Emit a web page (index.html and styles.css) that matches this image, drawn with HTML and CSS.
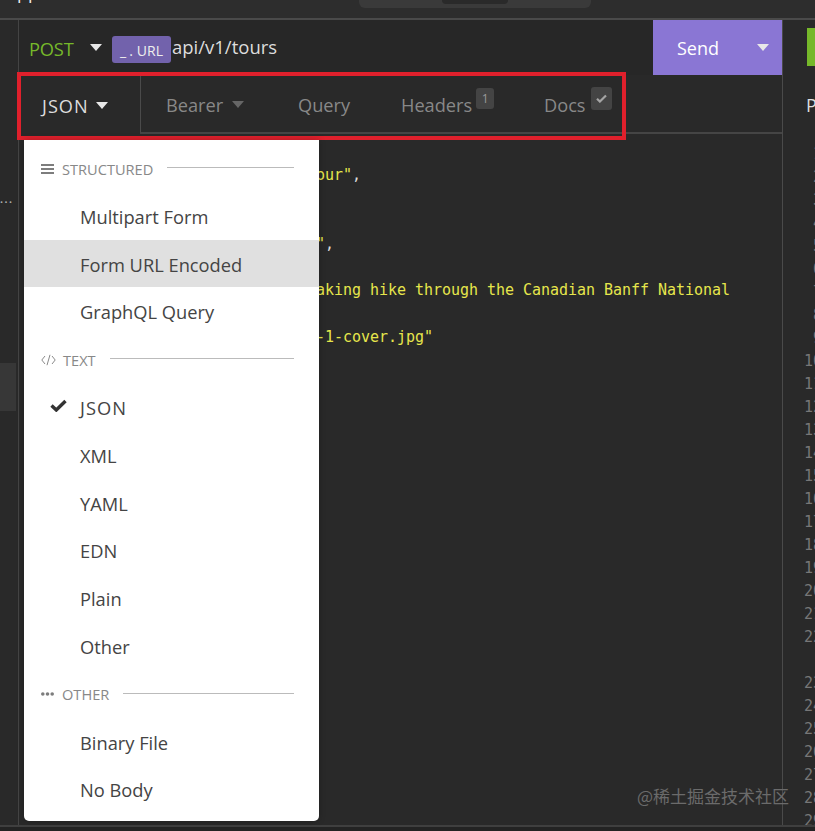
FILE: index.html
```html
<!DOCTYPE html>
<html lang="en">
<head>
<meta charset="utf-8">
<title>Request body menu</title>
<link rel="stylesheet" href="styles.css">
</head>
<body>
<div class="app">
  <header class="titlebar">
    <span class="app-name">pp</span>
    <div class="search-pill"><div class="search-inner"></div></div>
  </header>
  <div class="workspace">
    <aside class="sidebar">
      <div class="side-dots">•••</div>
      <div class="side-selected"></div>
    </aside>
    <main class="request">
      <div class="url-bar">
        <span class="method">POST</span>
        <span class="caret caret-method"></span>
        <span class="tag"><span class="tag-us">_.</span>URL</span>
        <span class="url">api/v1/tours</span>
        <div class="send">
          <span class="send-label">Send</span>
          <span class="caret caret-send"></span>
        </div>
      </div>
      <nav class="tabs">
        <div class="tab tab-active"><span class="wide">JSON</span> <span class="caret caret-json"></span></div>
        <div class="tab-rest">
          <div class="tab tab-bearer">Bearer <span class="caret caret-bearer"></span></div>
          <div class="tab tab-query">Query</div>
          <div class="tab tab-headers">Headers<span class="count">1</span></div>
          <div class="tab tab-docs">Docs<span class="count count-check">
            <svg viewBox="0 0 12 10" width="11" height="9"><path d="M1 5.2 4.2 8.4 11 1.6" fill="none" stroke="#a5a5a5" stroke-width="2.4"/></svg>
          </span></div>
        </div>
      </nav>
      <div class="code">
        <div class="ln">  <span class="k">"name"</span>: <span class="s">"The Test Tour"</span>,</div>
        <div class="ln">  <span class="k">"duration"</span>: <span class="s">5</span>,</div>
        <div class="ln">  <span class="k">"maxGroupSize"</span>: <span class="s">25</span>,</div>
        <div class="ln">  <span class="k">"difficulty"</span>: <span class="s">"easy"</span>,</div>
        <div class="ln">  <span class="k">"price"</span>: <span class="s">397</span>,</div>
        <div class="ln">  <span class="k">"summary"</span>: <span class="s">"Breathtaking hike through the Canadian Banff National</span></div>
        <div class="ln">  <span class="s">Park"</span>,</div>
        <div class="ln">  <span class="k">"imageCover"</span>: <span class="s">"tour-1-cover.jpg"</span></div>
      </div>
    </main>
    <section class="response">
      <div class="send-status"></div>
      <div class="res-tabs">Preview</div>
      <div class="res-nums">
        <div>1</div><div>2</div><div>3</div><div>4</div><div>5</div><div>6</div><div>7</div><div>8</div><div>9</div>
        <div>10</div><div>11</div><div>12</div><div>13</div><div>14</div><div>15</div><div>16</div><div>17</div><div>18</div><div>19</div><div>20</div><div>21</div><div>22</div><div>&nbsp;</div><div>23</div><div>24</div><div>25</div><div>26</div><div>27</div><div>28</div><div>29</div>
      </div>
    </section>
  </div>
  <div class="bottombar"></div>
</div>

<div class="highlight"></div>

<div class="menu">
  <div class="menu-head">
    <svg class="head-icon" viewBox="0 0 13 10" width="13" height="10"><path d="M0 0h13v2H0zM0 4h13v2H0zM0 8h13v2H0z" fill="#7d7d7d"/></svg>
    <span class="head-label">STRUCTURED</span><span class="rule"></span>
  </div>
  <div class="menu-item">Multipart Form</div>
  <div class="menu-item menu-item-hover">Form URL Encoded</div>
  <div class="menu-item">GraphQL Query</div>
  <div class="menu-head">
    <svg class="head-icon" viewBox="0 0 15 12" width="15" height="12"><path d="M4 2 .8 6 4 10M11 2l3.200 4L11 10M9 .8 6 11.200" fill="none" stroke="#8a8a8a" stroke-width="1"/></svg>
    <span class="head-label head-label-text">TEXT</span><span class="rule"></span>
  </div>
  <div class="menu-item menu-item-checked">
    <svg class="check" viewBox="0 0 17 13" width="17" height="13"><path d="M1.500 6.500 6.300 11 15.500 2" fill="none" stroke="#333" stroke-width="3.400"/></svg>
    <span class="wide">JSON</span>
  </div>
  <div class="menu-item">XML</div>
  <div class="menu-item">YAML</div>
  <div class="menu-item">EDN</div>
  <div class="menu-item">Plain</div>
  <div class="menu-item">Other</div>
  <div class="menu-head">
    <svg class="head-icon head-icon-dots" viewBox="0 0 13 4" width="13" height="4"><circle cx="1.800" cy="2" r="1.800" fill="#7d7d7d"/><circle cx="6.500" cy="2" r="1.800" fill="#7d7d7d"/><circle cx="11.200" cy="2" r="1.800" fill="#7d7d7d"/></svg>
    <span class="head-label">OTHER</span><span class="rule"></span>
  </div>
  <div class="menu-item">Binary File</div>
  <div class="menu-item">No Body</div>
</div>

<div class="watermark">@稀土掘金技术社区</div>
</body>
</html>
```
FILE: styles.css
```css
* { box-sizing: border-box; }
html, body { margin: 0; height: 100%; }
body {
  width: 815px;
  height: 831px;
  overflow: hidden;
  position: relative;
  background: #292929;
  font-family: "Open Sans", "Noto Sans", sans-serif;
  color: #ddd;
}
.app { display: flex; flex-direction: column; height: 831px; }
.wide { letter-spacing: 1px; }

.titlebar {
  flex: 0 0 20px;
  display: flex;
  background: #2d2d2d;
  border-bottom: 2px solid #4a4a4a;
  overflow: hidden;
}
.app-name {
  margin: -20px 0 0 17px;
  font-size: 18px;
  line-height: 24px;
  color: #eee;
}
.search-pill {
  width: 232px;
  height: 8px;
  margin-left: 320px;
  background: #3a3a3a;
  border-radius: 0 0 6px 6px;
  display: flex;
  justify-content: center;
}
.search-inner { width: 66px; height: 4px; background: #2a2a2a; border-radius: 0 0 5px 5px; }

.workspace { flex: 1; display: flex; min-height: 0; }
.sidebar {
  flex: 0 0 19px;
  background: #292929;
  border-right: 1px solid #444;
  padding-top: 171px;
  overflow: hidden;
}
.side-dots { height: 22px; font-size: 8px; line-height: 22px; letter-spacing: 1.5px; color: #aaa; white-space: nowrap; }
.side-selected { margin-top: 150px; height: 48px; width: 16px; background: #373737; }

.request { flex: 0 0 764px; display: flex; flex-direction: column; border-right: 1px solid #4a4a4a; min-width: 0; }

.url-bar { flex: 0 0 55px; display: flex; align-items: center; background: #272727; padding-left: 10px; }
.method { font-size: 18.3px; color: #76b82a; letter-spacing: -0.2px; width: 61px; margin-top: 2px; }
.caret { display: inline-block; width: 0; height: 0; border-left: 6px solid transparent; border-right: 6px solid transparent; border-top: 7px solid #e8e8e8; }
.caret-method { margin-right: 10px; }
.tag {
  height: 27px;
  width: 59px;
  margin-top: 4px;
  background: #7262ac;
  border-radius: 3px;
  color: #eee;
  font-size: 14px;
  line-height: 29px;
  padding-left: 8px;
  white-space: nowrap;
}
.tag-us { margin-right: 1px; letter-spacing: 3px; }
.url { font-size: 18.5px; color: #ddd; margin-left: 1px; margin-top: -3px; }
.send {
  margin-left: auto;
  width: 129px;
  height: 55px;
  background: #8a76d4;
  display: flex;
  align-items: center;
  color: #fff;
  font-size: 18px;
  padding-left: 24px;
}
.send-label { width: 80px; }

.tabs { flex: 0 0 59px; display: flex; }
.tab { font-size: 18.2px; display: flex; align-items: center; white-space: nowrap; padding-top: 2px; }
.tab-active { width: 121px; color: #ddd; padding-left: 23px; }
.caret-json { margin-left: 7px; }
.tab-rest {
  flex: 1;
  display: flex;
  color: #888;
  border-left: 1px solid #4a4a4a;
  border-bottom: 2px solid #454545;
  padding-left: 25px;
}
.tab-bearer { width: 132px; }
.caret-bearer { margin-left: 9px; border-top-color: #666; }
.tab-query { width: 103px; }
.tab-headers { width: 143px; }
.count {
  display: flex;
  align-items: center;
  justify-content: center;
  width: 18px;
  height: 21px;
  margin: -12px 0 0 4px;
  background: #444;
  border-radius: 3px;
  font-size: 12px;
  color: #999;
}
.count-check { width: 21px; height: 23px; margin-left: 5px; }

.code {
  padding: 30px 0 0 108px;
  font-family: "DejaVu Sans Mono", "Liberation Mono", monospace;
  font-size: 15px;
  line-height: 23.1px;
  color: #ddd;
  letter-spacing: -0.03px;
}
.ln { white-space: pre; height: 23.1px; }
.s { color: #e6e64c; }
.k { color: #d45ad0; }

.response { flex: 1; min-width: 0; overflow: hidden; display: flex; flex-direction: column; padding-left: 24px; }
.send-status { height: 38px; width: 20px; margin-top: 8px; background: #76b82a; flex: none; }
.res-tabs { flex: none; margin-top: 27px; font-size: 18px; line-height: 24px; color: #ddd; white-space: nowrap; margin-left: -1px; }
.res-nums {
  flex: none;
  width: 18px;
  margin-top: 26px;
  margin-left: -3px;
  font-family: "DejaVu Sans Mono", monospace;
  font-size: 15px;
  line-height: 23px;
  color: #777;
  text-align: right;
  white-space: nowrap;
}

.bottombar { flex: 0 0 6px; background: #232323; border-top: 2px solid #3f3f3f; position: relative; }

.highlight {
  position: absolute;
  left: 17px;
  top: 72px;
  width: 609px;
  height: 68px;
  border: 4px solid #e0202c;
  pointer-events: none;
}

.menu {
  position: absolute;
  left: 24px;
  top: 140px;
  width: 295px;
  height: 681px;
  padding-top: 4px;
  background: #fff;
  border-radius: 0 0 5px 5px;
  color: #444;
  box-shadow: 0 0 6px rgba(0,0,0,.25);
}
.menu-head {
  height: 47.8px;
  display: flex;
  align-items: center;
  padding: 1.4px 25px 0 17px;
  color: #888;
  font-size: 14.6px;
}
.head-icon { flex: 0 0 auto; margin-right: 8px; }
.head-label-text { margin-left: -1px; }
.rule { flex: 1; height: 1px; margin-left: 14px; margin-top: -2px; background: #bbb; }
.menu-item {
  height: 47.8px;
  display: flex;
  align-items: center;
  padding: 1.4px 0 0 56px;
  font-size: 18.3px;
  position: relative;
}
.menu-item-hover { background: #e0e0e0; }
.check { position: absolute; left: 26px; top: 16px; }

.watermark {
  position: absolute;
  left: 637px;
  top: 785px;
  font-family: "Noto Sans CJK SC", sans-serif;
  font-size: 17px;
  line-height: 22px;
  color: #6b6b6b;
  white-space: nowrap;
}
```
